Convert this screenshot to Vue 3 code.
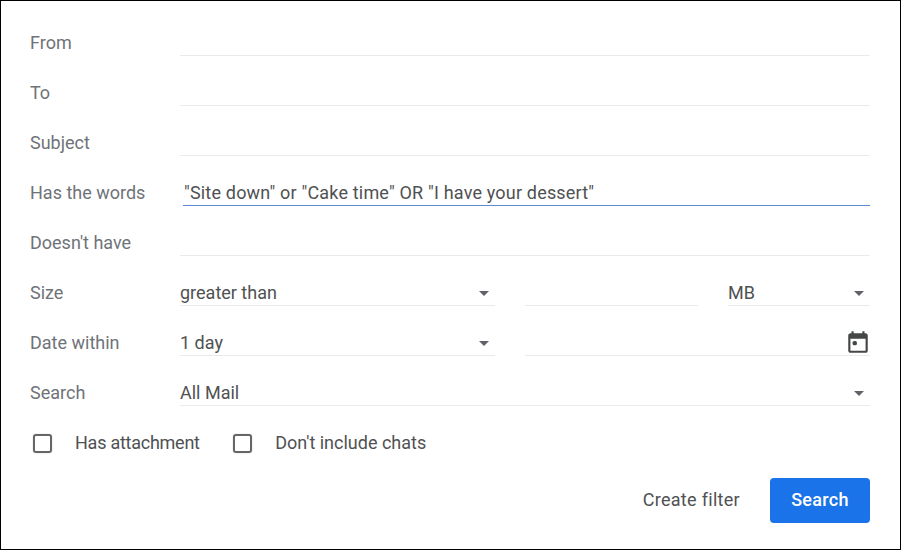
<template>
  <div class="frame">
    <div class="row" v-for="field in textFields" :key="field.label">
      <label class="label">{{ field.label }}</label>
      <div class="input" :class="{ focused: field.focused }">{{ field.value }}</div>
    </div>

    <div class="row">
      <label class="label">Size</label>
      <div class="split">
        <div class="input select wide">greater than<span class="caret"></span></div>
        <div class="input middle"></div>
        <div class="input select unit">MB<span class="caret"></span></div>
      </div>
    </div>

    <div class="row">
      <label class="label">Date within</label>
      <div class="split">
        <div class="input select wide">1 day<span class="caret"></span></div>
        <div class="input date">
          <svg class="calendar" width="26" height="26" viewBox="0 0 24 24">
            <path fill="#444746" d="M19 4h-1V2h-2v2H8V2H6v2H5c-1.100 0-2 .9-2 2v14c0 1.100.9 2 2 2h14c1.100 0 2-.9 2-2V6c0-1.100-.9-2-2-2zm0 16H5V9h14v11z"/>
            <rect fill="#444746" x="7" y="11" width="4" height="4" rx="1.5"/>
          </svg>
        </div>
      </div>
    </div>

    <div class="row">
      <label class="label">Search</label>
      <div class="input select">All Mail<span class="caret"></span></div>
    </div>

    <div class="checks">
      <label class="check first"><span class="box"></span>Has attachment</label>
      <label class="check"><span class="box"></span>Don't include chats</label>
    </div>

    <div class="actions">
      <button class="link">Create filter</button>
      <button class="primary">Search</button>
    </div>
  </div>
</template>

<script setup>
const textFields = [
  { label: "From", value: "" },
  { label: "To", value: "" },
  { label: "Subject", value: "" },
  { label: "Has the words", value: "\"Site down\" or \"Cake time\" OR \"I have your dessert\"", focused: true },
  { label: "Doesn't have", value: "" },
];
</script>

<style>
html, body {
  margin: 0;
  background: #fff;
}
</style>

<style scoped>
.frame {
  width: 901px;
  height: 550px;
  box-sizing: border-box;
  border: 1px solid #000;
  padding: 17px 30px 0 29px;
  font-family: Roboto, "Liberation Sans", sans-serif;
  font-size: 18px;
  color: #4f5152;
  background: #fff;
}

.row {
  display: flex;
  align-items: flex-start;
  height: 50px;
}

.label {
  width: 150px;
  flex: none;
  color: #6f7378;
  line-height: 50px;
}

.input {
  flex: 1;
  position: relative;
  height: 38px;
  box-sizing: border-box;
  line-height: 50px;
  border-bottom: 1px solid #e8eaed;
  white-space: nowrap;
}

.focused {
  margin-left: 3px;
  padding-left: 1px;
  letter-spacing: 0.18px;
  border-bottom-color: #5b8bd6;
}

.split {
  flex: 1;
  display: flex;
}

.wide {
  flex: none;
  width: 315px;
}

.middle {
  flex: none;
  width: 173px;
  margin-left: 30px;
}

.unit {
  flex: none;
  width: 142px;
  margin-left: 30px;
}

.date {
  flex: none;
  width: 345px;
  margin-left: 30px;
}

.caret {
  position: absolute;
  right: 6px;
  top: 23px;
  border-left: 5px solid transparent;
  border-right: 5px solid transparent;
  border-top: 5px solid #5f6368;
}

.calendar {
  position: absolute;
  right: -1px;
  top: 11px;
}

.checks {
  display: flex;
  align-items: center;
  gap: 33.4px;
  height: 48px;
  padding-left: 3px;
}

.check {
  display: flex;
  align-items: center;
  gap: 23px;
}

.first {
  letter-spacing: -0.25px;
}

.box {
  width: 15px;
  height: 15px;
  margin-top: 2px;
  border: 2px solid #666;
  border-radius: 3px;
  box-shadow: 0 0 1px #888;
}

.actions {
  display: flex;
  justify-content: flex-end;
  align-items: center;
  gap: 30px;
  margin-top: 12px;
}

.link {
  border: 0;
  background: none;
  padding: 0 0 2px;
  font: inherit;
  letter-spacing: 0.3px;
  color: #4f5152;
}

.primary {
  width: 100px;
  height: 45px;
  padding: 0 0 2px;
  border: 0;
  border-radius: 4px;
  background: #1a73e8;
  color: #fff;
  font: inherit;
  font-weight: 500;
  letter-spacing: 0.3px;
}
</style>
